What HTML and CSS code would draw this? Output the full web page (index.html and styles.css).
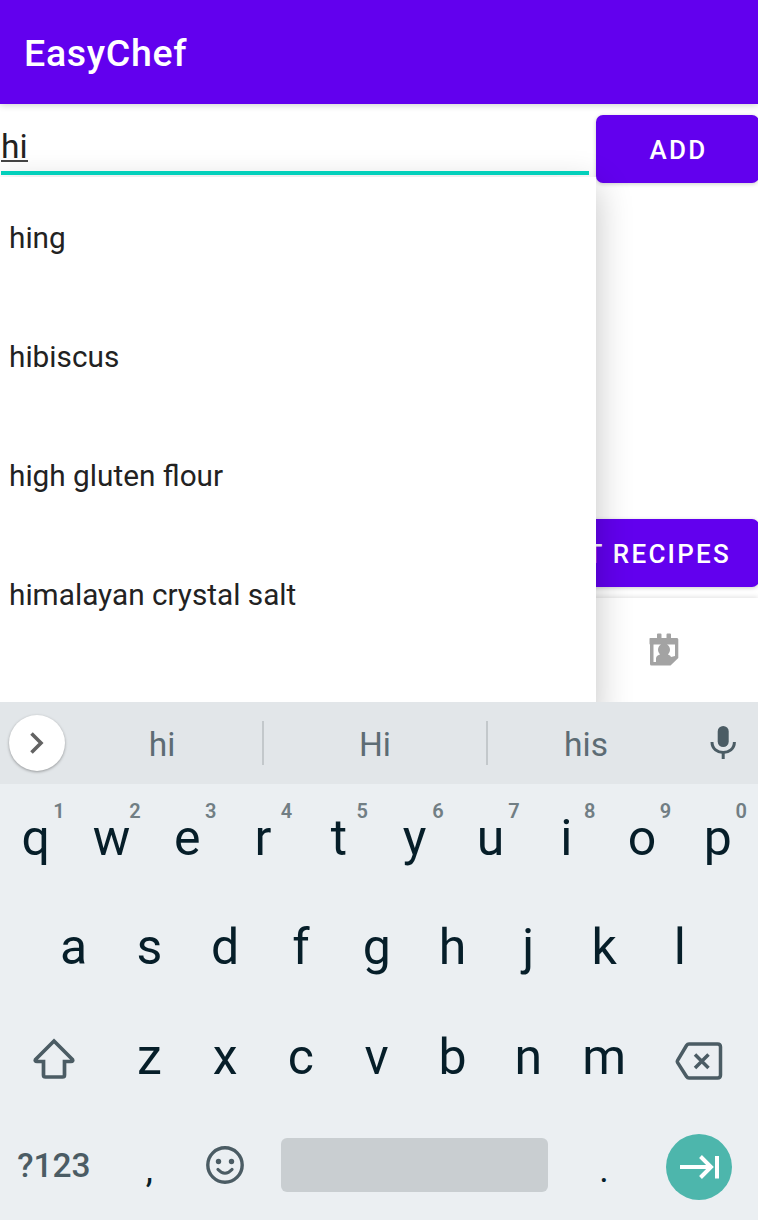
FILE: index.html
```html
<!DOCTYPE html>
<html lang="en">
<head>
<meta charset="utf-8">
<title>EasyChef</title>
<link rel="stylesheet" href="styles.css">
</head>
<body>
<div class="screen">
  <header class="app-bar"><h1 class="title">EasyChef</h1></header>
  <main class="content">
    <div class="entry-row">
      <div class="field"><span class="typed">hi</span></div>
      <button class="btn btn-add">ADD</button>
    </div>
    <div class="action-row"><button class="btn">GET RECIPES</button></div>
    <nav class="bottom-nav">
      <svg class="nav-icon" width="30" height="34" viewBox="0 0 30 34">
        <path fill="#a3a3a3" fill-rule="evenodd" d="M1 5H8V1.500Q8 .5 9 .5H11.500Q12.500 .5 12.500 1.500V5H17.500V1.500Q17.500 .5 18.500 .5H21Q22 .5 22 1.500V5H28Q29.300 5 29.300 6.500V25L21.500 32.500H2.500Q1 32.500 1 31V11.500Q.5 11.500.5 10.500V6Q.5 5 1 5ZM4.500 11.500V29H7V25.500Q7 22.500 11 21.500Q9 19.500 9 17Q9 13 12 11.500ZM18 11.500Q21 13 21 17Q21 19.500 19 21.500Q22 22.500 22 24L26 23V11.500Z"/>
      </svg>
    </nav>
    <ul class="dropdown">
      <li>hing</li><li>hibiscus</li><li>high gluten flour</li><li>himalayan crystal salt</li>
    </ul>
  </main>
  <section class="keyboard">
    <div class="strip">
      <div class="expand"><svg width="56" height="56" viewBox="0 0 56 56"><path d="M22.500 18.500L32 28L22.500 37.500" fill="none" stroke="#636363" stroke-width="3.600"/></svg></div>
      <span class="word">hi</span><span class="word">Hi</span><span class="word">his</span>
      <svg class="mic" width="26" height="34" viewBox="0 0 26 34"><rect x="7.700" y="0" width="11" height="21" rx="5.500" fill="#4b5c64"/><path d="M2 16C2 30 24.400 30 24.400 16M13.200 26.500V33" fill="none" stroke="#4b5c64" stroke-width="3"/></svg>
    </div>
    <div class="keys">
      <div class="row">
        <div class="key">q<sup>1</sup></div><div class="key">w<sup>2</sup></div><div class="key">e<sup>3</sup></div><div class="key">r<sup>4</sup></div><div class="key">t<sup>5</sup></div><div class="key">y<sup>6</sup></div><div class="key">u<sup>7</sup></div><div class="key">i<sup>8</sup></div><div class="key">o<sup>9</sup></div><div class="key">p<sup>0</sup></div>
      </div>
      <div class="row row-home">
        <div class="key">a</div><div class="key">s</div><div class="key">d</div><div class="key">f</div><div class="key">g</div><div class="key">h</div><div class="key">j</div><div class="key">k</div><div class="key">l</div>
      </div>
      <div class="row">
        <div class="key wide left shift"><svg width="44" height="42" viewBox="0 0 44 42"><path d="M22 3L40.500 21.500Q41.500 23.500 39 23.500H32.500V37Q32.500 39 30.500 39H13.500Q11.500 39 11.500 37V23.500H5Q2.500 23.500 3.500 21.500Z" fill="none" stroke="#4b5c64" stroke-width="3.700"/></svg></div>
        <div class="key">z</div><div class="key">x</div><div class="key">c</div><div class="key">v</div><div class="key">b</div><div class="key">n</div><div class="key">m</div>
        <div class="key wide right backspace"><svg width="48" height="38" viewBox="0 0 48 38"><path d="M14 2H42.500Q45.500 2 45.500 5V33Q45.500 36 42.500 36H14Q12.500 36 11.500 34.500L2.500 20.500Q2 19.500 2.500 18.500L11.500 3.500Q12.500 2 14 2ZM20 12.500L33.500 26M33.500 12.500L20 26" fill="none" stroke="#4b5c64" stroke-width="3.500"/></svg></div>
      </div>
      <div class="row">
        <div class="key wide left mode">?123</div>
        <div class="key punct">,</div>
        <div class="key emoji"><svg width="38" height="38" viewBox="0 0 38 38"><circle cx="19" cy="19" r="17.200" fill="none" stroke="#4b5c64" stroke-width="3.400"/><circle cx="12.500" cy="15.500" r="2.700" fill="#4b5c64"/><circle cx="25.500" cy="15.500" r="2.700" fill="#4b5c64"/><path d="M12 23.500Q19 31 26 23.500" fill="none" stroke="#4b5c64" stroke-width="3.200" stroke-linecap="round"/></svg></div>
        <div class="space"></div>
        <div class="key punct">.</div>
        <div class="key wide right go"><div class="enter"><svg width="66" height="66" viewBox="0 0 66 66"><path d="M14 33H45M34.500 22.500L45 33L34.500 43.500M51 22V44.500" fill="none" stroke="#fff" stroke-width="4"/></svg></div></div>
      </div>
    </div>
  </section>
</div>
</body>
</html>
```
FILE: styles.css
```css
* { box-sizing: border-box; }
body { margin: 0; font-family: Roboto, sans-serif; background: #fff; }
svg { display: block; }
.screen { display: flex; flex-direction: column; width: 758px; height: 1220px; overflow: hidden; }
.app-bar { height: 104px; padding: 2px 24px 0; display: flex; align-items: center; background: #6200ee; color: #fff; box-shadow: 0 1px 7px rgba(0,0,0,.2); z-index: 1; }
.title { margin: 0; font-size: 37.500px; font-weight: 500; letter-spacing: .7px; }
.content { position: relative; height: 598px; display: flex; flex-direction: column; overflow: hidden; }
.entry-row { display: flex; height: 79px; padding-top: 11px; }
.field { display: flex; align-items: flex-start; flex: none; width: 588px; height: 60px; margin: 0 7px 0 1px; padding-top: 17px; border-bottom: 4px solid #03d0bb; font-size: 33.500px; color: #222; z-index: 3; }
.typed { height: 30px; line-height: 29px; border-bottom: 2px solid #444; }
.btn { height: 68px; padding: 2px 29px 0; border: 0; border-radius: 7px; background: #6200ee; color: #fff; font: 500 26px Roboto, sans-serif; letter-spacing: 2.350px; box-shadow: 0 1px 4px rgba(0,0,0,.2); flex: none; }
.btn-add { width: 163px; padding: 2px 27px 0 29px; }
.action-row { display: flex; justify-content: flex-end; margin-top: 336px; height: 79px; margin-right: -1px; }
.action-row .btn { padding-right: 28px; letter-spacing: 2.250px; }
.bottom-nav { flex: 1; padding: 35px 0 0 649px; background: #fff; box-shadow: 0 -1px 5px rgba(0,0,0,.12); z-index: 1; }
.dropdown { position: absolute; left: 0; top: 73px; z-index: 2; width: 596px; height: 540px; margin: 0; padding: .7px 0 0 9px; list-style: none; background: #fff; box-shadow: 0 10px 34px rgba(0,0,0,.24); }
.dropdown li { height: 119.250px; line-height: 119px; font-size: 29.750px; color: #222; }
.keyboard { height: 518px; background: #ebeff2; z-index: 4; }
.strip { display: grid; grid-template-columns: 61px 203px 224px 196px 1fr; align-items: center; height: 82px; background: #e2e6e9; }
.expand { width: 56px; height: 56px; margin-left: 9px; border-radius: 50%; background: #fff; box-shadow: 0 1px 3px rgba(0,0,0,.35); }
.word { height: 44px; line-height: 48px; text-align: center; font-size: 33.500px; color: #5d6c74; border-right: 2px solid #c3c8cb; }
.word:nth-of-type(1) { padding-left: 1px; }
.word:nth-of-type(3) { border: 0; }
.mic { margin: 0 0 0 26px; }
.keys { display: grid; grid-template-rows: repeat(4, 109px); }
.row { display: flex; }
.row-home { padding: 0 37.900px; }
.key { position: relative; width: 75.800px; flex: none; display: flex; justify-content: center; align-items: center; padding: 0 4.500px 1px 0; font-size: 50px; line-height: 1; color: #061e29; }
.row:nth-child(3) .key { padding-bottom: 0; }
.key sup { position: absolute; right: 11px; top: 17px; font-size: 20px; line-height: 21px; font-weight: 600; color: #717e84; }
.wide { width: 113.700px; }
.left { padding-right: 6px; }
.row:nth-child(3) .shift { padding: 4px 5px 0 0; }
.row:nth-child(3) .backspace { padding: 8px 5px 0 0; }
.mode { font-size: 33.500px; font-weight: 500; color: #4b5c64; padding-bottom: 0; }
.punct { font-size: 36px; padding-bottom: 0; padding-top: 9px; }
.emoji { padding-bottom: 1px; }
.space { width: 267px; height: 54px; margin: 27px 20.500px 0 15.700px; border-radius: 6px; background: #c9ced1; }
.go { padding: 2px 4px 0 0; }
.enter { width: 66px; height: 66px; border-radius: 50%; background: #4db6ac; }
```
